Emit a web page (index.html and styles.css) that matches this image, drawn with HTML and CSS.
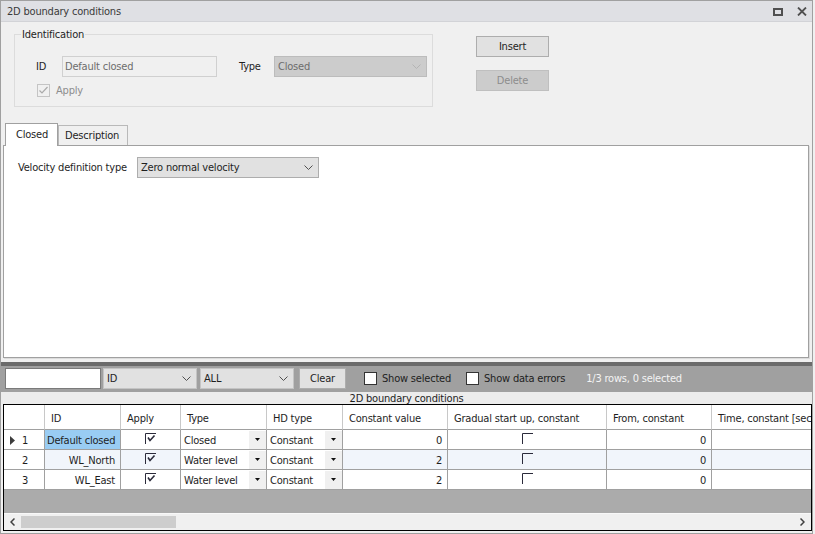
FILE: index.html
```html
<!DOCTYPE html>
<html lang="en">
<head>
    <meta charset="UTF-8">
    <meta name="viewport" content="width=device-width, initial-scale=1.0">
    <title>2D boundary conditions</title>
    <link rel="stylesheet" href="styles.css">
</head>
<body>
    <div class="window">
        <div class="titlebar">
            <span class="title">2D boundary conditions</span>
            <div class="win-buttons">
                <svg width="10" height="8" viewBox="0 0 10 8"><rect x="1" y="1" width="8" height="6" fill="none" stroke="#505050" stroke-width="2"/></svg>
                <svg width="10" height="9" viewBox="0 0 10 9"><path d="M1 0.5L9 8.5M9 0.5L1 8.5" stroke="#505050" stroke-width="1.8"/></svg>
            </div>
        </div>

        <div class="top">
            <fieldset class="ident">
                <legend>Identification</legend>
                <div class="ident-row">
                    <label class="lbl-id">ID</label>
                    <div class="textbox disabled">Default closed</div>
                    <label class="lbl-type">Type</label>
                    <div class="combo disabled">
                        <span>Closed</span>
                        <svg class="chev" width="9" height="5" viewBox="0 0 9 5"><path d="M0.5 0.5L4.5 4.5L8.5 0.5" fill="none" stroke="#b4b4b4"/></svg>
                    </div>
                </div>
                <div class="apply-row">
                    <span class="checkbox disabled">
                        <svg width="11" height="11" viewBox="0 0 11 11"><path d="M1.5 5.5L4 8L9.5 2" fill="none" stroke="#aaaaaa" stroke-width="1.2"/></svg>
                    </span>
                    <span class="dim">Apply</span>
                </div>
            </fieldset>
            <div class="side-buttons">
                <button class="btn">Insert</button>
                <button class="btn" disabled>Delete</button>
            </div>
        </div>

        <div class="tabs">
            <div class="tab active">Closed</div>
            <div class="tab">Description</div>
        </div>
        <div class="panel">
            <div class="panel-row">
                <span class="lbl-velocity">Velocity definition type</span>
                <div class="combo velocity">
                    <span>Zero normal velocity</span>
                    <svg class="chev" width="9" height="5" viewBox="0 0 9 5"><path d="M0.5 0.5L4.5 4.5L8.5 0.5" fill="none" stroke="#505050"/></svg>
                </div>
            </div>
        </div>

        <div class="splitter"></div>

        <div class="filter">
            <div class="filter-input"></div>
            <div class="combo filter-combo first">
                <span>ID</span>
                <svg class="chev" width="9" height="5" viewBox="0 0 9 5"><path d="M0.5 0.5L4.5 4.5L8.5 0.5" fill="none" stroke="#505050"/></svg>
            </div>
            <div class="combo filter-combo second">
                <span>ALL</span>
                <svg class="chev" width="9" height="5" viewBox="0 0 9 5"><path d="M0.5 0.5L4.5 4.5L8.5 0.5" fill="none" stroke="#505050"/></svg>
            </div>
            <button class="btn clear">Clear</button>
            <span class="checkbox white show-sel"></span>
            <span class="chk-label">Show selected</span>
            <span class="checkbox white show-err"></span>
            <span class="chk-label">Show data errors</span>
            <span class="count">1/3 rows, 0 selected</span>
        </div>

        <div class="caption">2D boundary conditions</div>

        <div class="grid">
            <div class="grid-body">
                <div class="grid-table">
                    <div class="hcell"></div>
                    <div class="hcell">ID</div>
                    <div class="hcell">Apply</div>
                    <div class="hcell">Type</div>
                    <div class="hcell">HD type</div>
                    <div class="hcell">Constant value</div>
                    <div class="hcell">Gradual start up, constant</div>
                    <div class="hcell">From, constant</div>
                    <div class="hcell">Time, constant [sec]</div>

                    <div class="cell rowhead"><span class="mark"><svg width="5" height="9" viewBox="0 0 5 9"><path d="M0 0L5 4.5L0 9Z" fill="#3c3c3c"/></svg></span>1</div>
                    <div class="cell selected">Default closed</div>
                    <div class="cell center"><svg width="11" height="11" viewBox="0 0 11 11"><path d="M0.5 11V0.5H11" fill="none" stroke="#2a2a3a"/><path d="M3 4.5L5 7.5L9.5 2.5" fill="none" stroke="#2a2a3a" stroke-width="1.6"/></svg></div>
                    <div class="cell dd-cell"><span>Closed</span><span class="dd"><svg width="5" height="3" viewBox="0 0 5 3"><path d="M0 0H5L2.5 3Z" fill="#111"/></svg></span></div>
                    <div class="cell dd-cell"><span>Constant</span><span class="dd"><svg width="5" height="3" viewBox="0 0 5 3"><path d="M0 0H5L2.5 3Z" fill="#111"/></svg></span></div>
                    <div class="cell right">0</div>
                    <div class="cell center"><svg width="11" height="11" viewBox="0 0 11 11"><path d="M0.5 11V0.5H11" fill="none" stroke="#2a2a3a"/></svg></div>
                    <div class="cell right">0</div>
                    <div class="cell"></div>

                    <div class="cell rowhead"><span class="mark"></span>2</div>
                    <div class="cell right alt">WL_North</div>
                    <div class="cell center alt"><svg width="11" height="11" viewBox="0 0 11 11"><path d="M0.5 11V0.5H11" fill="none" stroke="#2a2a3a"/><path d="M3 4.5L5 7.5L9.5 2.5" fill="none" stroke="#2a2a3a" stroke-width="1.6"/></svg></div>
                    <div class="cell dd-cell"><span>Water level</span><span class="dd"><svg width="5" height="3" viewBox="0 0 5 3"><path d="M0 0H5L2.5 3Z" fill="#111"/></svg></span></div>
                    <div class="cell dd-cell"><span>Constant</span><span class="dd"><svg width="5" height="3" viewBox="0 0 5 3"><path d="M0 0H5L2.5 3Z" fill="#111"/></svg></span></div>
                    <div class="cell right alt">2</div>
                    <div class="cell center alt"><svg width="11" height="11" viewBox="0 0 11 11"><path d="M0.5 11V0.5H11" fill="none" stroke="#2a2a3a"/></svg></div>
                    <div class="cell right alt">0</div>
                    <div class="cell alt"></div>

                    <div class="cell rowhead"><span class="mark"></span>3</div>
                    <div class="cell right">WL_East</div>
                    <div class="cell center"><svg width="11" height="11" viewBox="0 0 11 11"><path d="M0.5 11V0.5H11" fill="none" stroke="#2a2a3a"/><path d="M3 4.5L5 7.5L9.5 2.5" fill="none" stroke="#2a2a3a" stroke-width="1.6"/></svg></div>
                    <div class="cell dd-cell"><span>Water level</span><span class="dd"><svg width="5" height="3" viewBox="0 0 5 3"><path d="M0 0H5L2.5 3Z" fill="#111"/></svg></span></div>
                    <div class="cell dd-cell"><span>Constant</span><span class="dd"><svg width="5" height="3" viewBox="0 0 5 3"><path d="M0 0H5L2.5 3Z" fill="#111"/></svg></span></div>
                    <div class="cell right">2</div>
                    <div class="cell center"><svg width="11" height="11" viewBox="0 0 11 11"><path d="M0.5 11V0.5H11" fill="none" stroke="#2a2a3a"/></svg></div>
                    <div class="cell right">0</div>
                    <div class="cell"></div>
                </div>
            </div>
            <div class="hscroll">
                <span class="arrow"><svg width="5" height="8" viewBox="0 0 5 8"><path d="M4.5 0.5L1 4L4.5 7.5" fill="none" stroke="#404040" stroke-width="1.5"/></svg></span>
                <span class="thumb"></span>
                <span class="spacer"></span>
                <span class="arrow"><svg width="5" height="8" viewBox="0 0 5 8"><path d="M0.5 0.5L4 4L0.5 7.5" fill="none" stroke="#404040" stroke-width="1.5"/></svg></span>
            </div>
        </div>
    </div>
</body>
</html>
```

FILE: styles.css
```css
body {
    margin: 0;
    padding: 0;
    background: #f0f0f0;
    font-family: "DejaVu Sans Condensed", "DejaVu Sans", sans-serif;
    font-stretch: condensed;
    font-size: 11px;
    letter-spacing: -0.2px;
    color: #1e1e1e;
    overflow: hidden;
}

.window {
    width: 813px;
    height: 534px;
    box-sizing: border-box;
    border: 1px solid #a0a0a0;
    background: #f0f0f0;
    display: flex;
    flex-direction: column;
    overflow: hidden;
}

.titlebar {
    height: 21px;
    flex: none;
    box-sizing: border-box;
    border-bottom: 1px solid #d2d3d7;
    background: #dfe0e4;
    display: flex;
    align-items: center;
    padding: 1px 5px 0 6px;
}

.title {
    color: #3a3a3a;
}

.win-buttons {
    margin-left: auto;
    display: flex;
    align-items: center;
    gap: 14px;
}

.win-buttons svg {
    display: block;
}

/* identification + buttons */
.top {
    height: 101px;
    flex: none;
    display: flex;
    align-items: flex-start;
}

.ident {
    margin: 6px 0 0 13px;
    padding: 0 0 9px 0;
    width: 419px;
    box-sizing: border-box;
    border: 1px solid #dcdcdc;
    min-width: 0;
}

.ident legend {
    margin-left: 6px;
    padding: 0 1px;
    line-height: 13px;
}

.ident-row {
    display: flex;
    align-items: center;
    margin-top: 15px;
    height: 21px;
}

.lbl-id {
    margin-left: 21px;
    width: 26px;
}

.lbl-type {
    margin-left: 22px;
    width: 35px;
}

.textbox {
    width: 155px;
    height: 21px;
    box-sizing: border-box;
    border: 1px solid #d0d0d0;
    padding: 2px 2px;
    line-height: 15px;
}

.disabled {
    color: #6d6d6d;
}

.combo {
    display: flex;
    align-items: center;
    box-sizing: border-box;
    height: 21px;
    padding: 0 5px 0 3px;
    background: #e1e1e1;
    border: 1px solid #adadad;
}

.combo span {
    flex: 1;
}

.combo.disabled {
    width: 153px;
    background: #cccccc;
    border-color: #bcbcbc;
}

.chev {
    display: block;
}

.apply-row {
    display: flex;
    align-items: center;
    margin: 7px 0 0 22px;
    height: 13px;
}

.checkbox {
    width: 13px;
    height: 13px;
    box-sizing: border-box;
    display: flex;
    align-items: center;
    justify-content: center;
}

.checkbox.disabled {
    border: 1px solid #c4c4c4;
    margin-right: 6px;
}

.dim {
    color: #8d8d8d;
}

.side-buttons {
    margin: 14px 0 0 43px;
    display: flex;
    flex-direction: column;
    gap: 13px;
}

.btn {
    font: inherit;
    letter-spacing: inherit;
    color: #1e1e1e;
    width: 73px;
    height: 21px;
    padding: 0;
    background: #e1e1e1;
    border: 1px solid #adadad;
}

.btn:disabled {
    background: #cccccc;
    border-color: #bfbfbf;
    color: #8d8d8d;
}

/* tabs */
.tabs {
    height: 22px;
    flex: none;
    display: flex;
    align-items: flex-end;
    padding-left: 4px;
}

.tab {
    box-sizing: border-box;
    height: 20px;
    width: 70px;
    padding-left: 6px;
    line-height: 20px;
    background: #f0f0f0;
    border: 1px solid #b9b9b9;
    border-bottom: none;
}

.tab.active {
    width: 53px;
    height: 23px;
    margin-bottom: -1px;
    padding-left: 10px;
    line-height: 22px;
    background: #fff;
    border-color: #a0a0a0;
    position: relative;
    z-index: 1;
}

.panel {
    height: 213px;
    flex: none;
    box-sizing: border-box;
    margin: 0 3px 0 2px;
    background: #fff;
    border: 1px solid #a0a0a0;
    box-shadow: 1px 1px 0 #dcdcdc;
}

.panel-row {
    display: flex;
    align-items: center;
    margin: 11px 0 0 14px;
}

.lbl-velocity {
    width: 119px;
}

.combo.velocity {
    width: 182px;
}

.splitter {
    flex: none;
    height: 4px;
    margin-top: 4px;
    background: #6b6b6b;
}

/* filter bar */
.filter {
    height: 26px;
    flex: none;
    box-sizing: border-box;
    background: #a0a0a0;
    display: flex;
    align-items: center;
    padding: 0 0 1px 4px;
}

.filter-input {
    width: 96px;
    height: 21px;
    box-sizing: border-box;
    background: #fff;
    border: 1px solid #7a7a7a;
}

.filter-combo {
    width: 94px;
    border-color: #c4c4c4;
}

.filter-combo.first {
    margin-left: 2px;
}

.filter-combo.second {
    margin-left: 3px;
}

.btn.clear {
    width: 47px;
    margin-left: 5px;
}

.checkbox.white {
    background: #fff;
    border: 1px solid #333;
}

.show-sel {
    margin-left: 18px;
}

.show-err {
    margin-left: 15px;
}

.chk-label {
    margin-left: 5px;
}

.count {
    margin-left: 21px;
    color: #f4f4f4;
}

.caption {
    height: 12px;
    flex: none;
    line-height: 13px;
    text-align: center;
    background: #ececec;
}

/* grid */
.grid {
    height: 127px;
    flex: none;
    box-sizing: border-box;
    margin-left: 2px;
    border: 1px solid #000;
    background: #ababab;
    display: flex;
    flex-direction: column;
}

.grid-body {
    flex: 1;
    overflow: hidden;
}

.grid-table {
    display: grid;
    grid-template-columns: 41px 76px 60px 86px 76px 105px 159px 105px 140px;
    grid-template-rows: 25px;
    grid-auto-rows: 20px;
    width: max-content;
}

.hcell {
    box-sizing: border-box;
    padding: 7px 0 0 6px;
    background: #fff;
    border-right: 1px solid #c8c8c8;
    border-bottom: 1px solid #a0a0a0;
    white-space: nowrap;
    overflow: hidden;
}

.cell {
    box-sizing: border-box;
    background: #fff;
    border-right: 1px solid #a0a0a0;
    border-bottom: 1px solid #a0a0a0;
    display: flex;
    align-items: center;
    padding: 1px 3px 0;
    white-space: nowrap;
    overflow: hidden;
}

.cell.alt {
    background: #f1f5fb;
}

.cell.selected {
    background: #99ccf3;
    padding-left: 2px;
}

.cell.right {
    justify-content: flex-end;
    padding-right: 5px;
}

.cell.center {
    justify-content: center;
}

.cell.center svg {
    margin-top: -3px;
}

.rowhead {
    padding-left: 6px;
}

.mark {
    width: 12px;
    display: flex;
    align-items: center;
}

.dd-cell {
    padding: 0 0 0 3px;
}

.dd-cell span:first-child {
    flex: 1;
    padding-top: 1px;
}

.dd {
    width: 17px;
    height: 18px;
    background: #f0f0f0;
    display: flex;
    align-items: center;
    justify-content: center;
}

.hscroll {
    height: 17px;
    flex: none;
    box-sizing: border-box;
    border-top: 1px solid #f8f8f8;
    background: #f0f0f0;
    display: flex;
    align-items: center;
}

.arrow {
    width: 17px;
    display: flex;
    justify-content: center;
}

.thumb {
    width: 155px;
    height: 12px;
    background: #cdcdcd;
}

.spacer {
    flex: 1;
}
```
